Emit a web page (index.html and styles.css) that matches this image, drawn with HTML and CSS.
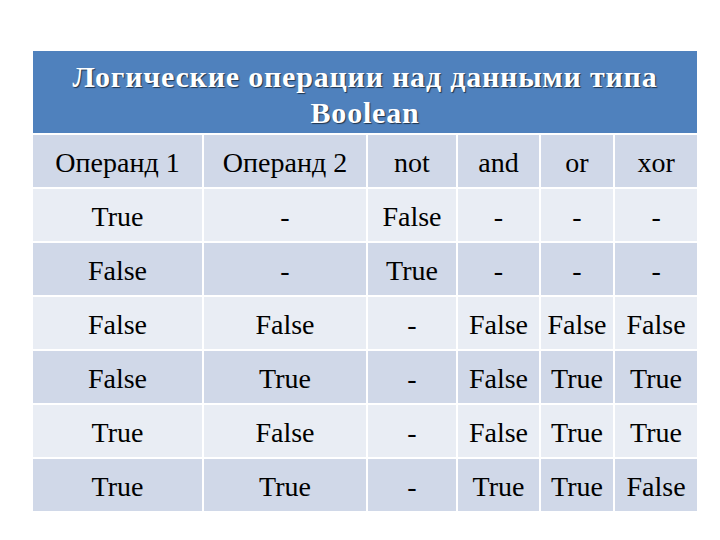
FILE: index.html
```html
<!DOCTYPE html>
<html lang="ru">
<head>
<meta charset="utf-8">
<link rel="stylesheet" href="styles.css">
</head>
<body>
<table class="truth">
  <colgroup>
    <col class="c1"><col class="c2"><col class="c3"><col class="c4"><col class="c5"><col class="c6">
  </colgroup>
  <thead>
    <tr><th colspan="6" class="title">Логические операции над данными типа Boolean</th></tr>
  </thead>
  <tbody>
    <tr class="dark"><td>Операнд 1</td><td>Операнд 2</td><td>not</td><td>and</td><td>or</td><td>xor</td></tr>
    <tr class="light"><td>True</td><td>-</td><td>False</td><td>-</td><td>-</td><td>-</td></tr>
    <tr class="dark"><td>False</td><td>-</td><td>True</td><td>-</td><td>-</td><td>-</td></tr>
    <tr class="light"><td>False</td><td>False</td><td>-</td><td>False</td><td>False</td><td>False</td></tr>
    <tr class="dark"><td>False</td><td>True</td><td>-</td><td>False</td><td>True</td><td>True</td></tr>
    <tr class="light"><td>True</td><td>False</td><td>-</td><td>False</td><td>True</td><td>True</td></tr>
    <tr class="dark"><td>True</td><td>True</td><td>-</td><td>True</td><td>True</td><td>False</td></tr>
  </tbody>
</table>
</body>
</html>
```

FILE: styles.css
```css
html, body {
  margin: 0;
  padding: 0;
  background: #ffffff;
}
body {
  padding: 51px 0 0 33px;
  font-family: "Liberation Serif", "Times New Roman", serif;
}
.truth {
  border-collapse: collapse;
  table-layout: fixed;
  width: 664px;
  font-family: "Liberation Serif", "Times New Roman", serif;
}
.c1 { width: 170px; }
.c2 { width: 164px; }
.c3 { width: 90px; }
.c4 { width: 83px; }
.c5 { width: 74px; }
.c6 { width: 83px; }
.truth th, .truth td {
  border: 2px solid #ffffff;
  text-align: center;
  padding: 0;
}
.truth .title {
  font-family: "Liberation Serif", "Times New Roman", serif;
  background: #4f81bd;
  color: #ffffff;
  font-weight: bold;
  font-size: 30px;
  letter-spacing: 0.8px;
  line-height: 36px;
  height: 83px;
  vertical-align: top;
  padding: 8px 30px 0;
  text-shadow: 1px 1px 1px rgba(0, 0, 0, 0.6);
  box-sizing: border-box;
  border-top: none;
  border-left: none;
  border-right: none;
}
.truth td {
  font-family: "Liberation Serif", "Times New Roman", serif;
  font-size: 28px;
  color: #000000;
  height: 48px;
  padding-top: 4px;
}
.truth tr td:first-child { border-left: none; }
.truth tr td:last-child { border-right: none; }
.truth tbody tr:last-child td { border-bottom: none; }
.dark td { background: #d0d8e8; }
.light td { background: #e9edf4; }
```
